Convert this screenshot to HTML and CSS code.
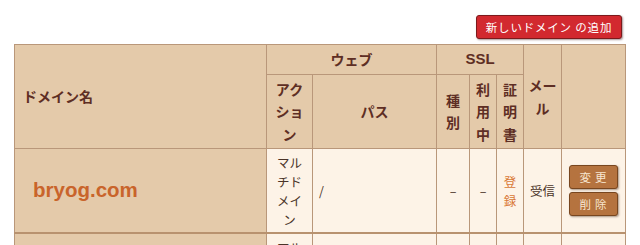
FILE: index.html
```html
<!DOCTYPE html>
<html lang="ja">
<head>
<meta charset="utf-8">
<title>ドメイン設定</title>
<link rel="stylesheet" href="styles.css">
</head>
<body>
<div class="page">
  <div class="toolbar">
    <button class="btn-add" type="button">新しいドメイン の追加</button>
  </div>
  <table class="domains">
    <colgroup>
      <col class="c-name">
      <col class="c-action">
      <col class="c-path">
      <col class="c-kind">
      <col class="c-use">
      <col class="c-cert">
      <col class="c-mail">
      <col class="c-ops">
    </colgroup>
    <thead>
      <tr class="h1">
        <th rowspan="2" class="th-name">ドメイン名</th>
        <th colspan="2">ウェブ</th>
        <th colspan="3" class="th-ssl">SSL</th>
        <th rowspan="2">メール</th>
        <th rowspan="2"></th>
      </tr>
      <tr class="h2">
        <th>アクション</th>
        <th>パス</th>
        <th>種別</th>
        <th>利用中</th>
        <th>証明書</th>
      </tr>
    </thead>
    <tbody>
      <tr>
        <td class="td-name"><a href="#">bryog.com</a></td>
        <td class="center">マルチドメイン</td>
        <td>/</td>
        <td class="center">–</td>
        <td class="center">–</td>
        <td class="center"><a class="link" href="#">登録</a></td>
        <td class="center">受信</td>
        <td class="center ops">
          <button class="btn-op" type="button">変更</button>
          <button class="btn-op" type="button">削除</button>
        </td>
      </tr>
      <tr>
        <td class="td-name"><a href="#">www.bryog.com</a></td>
        <td class="center">マルチドメイン</td>
        <td>/</td>
        <td class="center">–</td>
        <td class="center">–</td>
        <td class="center"><a class="link" href="#">登録</a></td>
        <td class="center">受信</td>
        <td class="center ops">
          <button class="btn-op" type="button">変更</button>
          <button class="btn-op" type="button">削除</button>
        </td>
      </tr>
    </tbody>
  </table>
</div>
</body>
</html>
```

FILE: styles.css
```css
html, body {
  margin: 0;
  padding: 0;
  background: #ffffff;
}

body {
  font-family: "Noto Sans CJK JP", "Noto Sans", sans-serif;
  color: #4a3428;
}

.page {
  padding: 15px 15px 0 14px;
}

.toolbar {
  display: flex;
  justify-content: flex-end;
  padding-right: 3px;
  margin-bottom: 5px;
}

.btn-add {
  width: 146px;
  height: 24px;
  padding: 0;
  border: 1px solid #7c1a1c;
  border-radius: 3px;
  background: #d2292f;
  color: #ffffff;
  font-family: "Noto Sans CJK JP", sans-serif;
  font-size: 11.5px;
  letter-spacing: 0.8px;
  line-height: 22px;
  box-shadow: 1px 1px 2px rgba(60, 20, 20, 0.45);
}

.domains {
  width: 611px;
  border-collapse: collapse;
  table-layout: fixed;
  border: 1px solid #b9977a;
}

.c-name { width: 252px; }
.c-action { width: 46px; }
.c-path { width: 124px; }
.c-kind { width: 33px; }
.c-use { width: 27px; }
.c-cert { width: 27px; }
.c-mail { width: 38px; }
.c-ops { width: 64px; }

.domains th {
  background: #e4caaa;
  color: #5e2e24;
  font-size: 14px;
  font-weight: bold;
  line-height: 22.5px;
  padding: 3px 4px;
  border: 1px solid #b9977a;
  text-align: center;
  vertical-align: middle;
}

.domains .h1 th {
  height: 22px;
}

.domains .th-name {
  text-align: left;
  padding-left: 8px;
}

.domains .th-ssl {
  font-family: "Liberation Sans", "Noto Sans", sans-serif;
  font-size: 15px;
}

.domains .h2 th:first-child {
  padding: 3px 6px;
}

.domains td {
  background: #fdf3e7;
  font-size: 12.5px;
  line-height: 19px;
  padding: 3px 6px;
  border: 1px solid #b9977a;
  vertical-align: middle;
  height: 77px;
}

.domains tbody tr {
  border-bottom: 2px solid #b8926f;
}

.domains td.center {
  text-align: center;
}

.domains td.td-name {
  background: #e4caaa;
  padding-left: 18px;
}

.td-name a {
  font-family: "Liberation Sans", "Noto Sans", sans-serif;
  font-size: 20.5px;
  font-weight: bold;
  color: #c9642b;
  text-decoration: none;
}

.link {
  color: #d97836;
  text-decoration: none;
}

.domains td.ops {
  padding: 3px 0;
}

.btn-op {
  display: block;
  margin: 0 auto 3px;
  width: 49px;
  height: 24px;
  padding: 0 0 0 3px;
  border: 1px solid #78461f;
  border-radius: 3px;
  background: #b5733f;
  color: #f8e6cf;
  font-family: "Noto Sans CJK JP", sans-serif;
  font-size: 11.5px;
  letter-spacing: 4px;
  line-height: 22px;
  box-shadow: 1px 1px 2px rgba(70, 40, 20, 0.45);
}

.btn-op:last-child {
  margin-bottom: 0;
}
```
